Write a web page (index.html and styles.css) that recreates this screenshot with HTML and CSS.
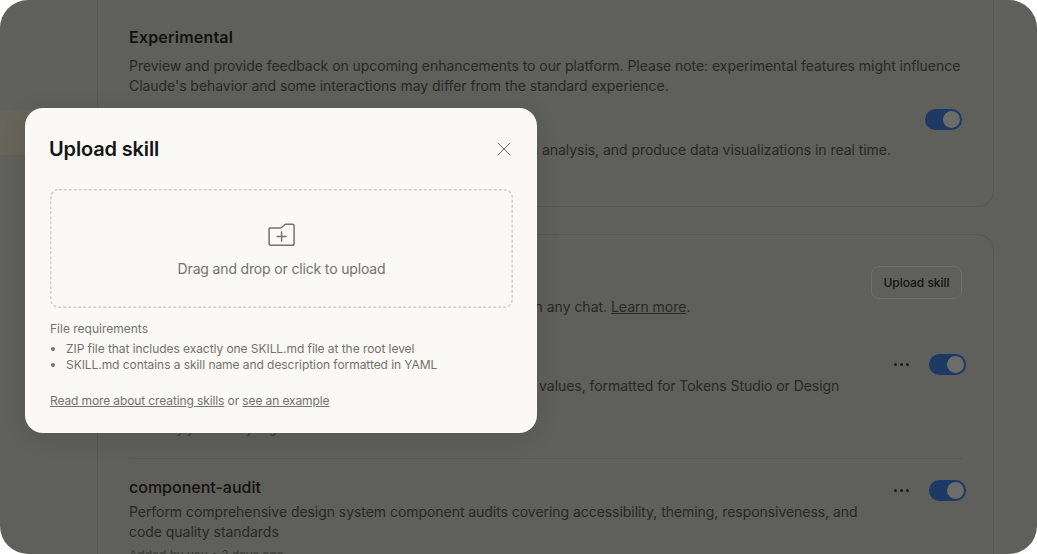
FILE: index.html
```html
<!DOCTYPE html>
<html>
<head>
    <title>Upload skill</title>
    <link rel="stylesheet" href="styles.css">
</head>
<body>
    <div class="stage">
        <div class="sidebar">
            <div class="nav-item"></div>
        </div>

        <div class="main">
            <section class="card card-top">
                <h2 class="card-title">Experimental</h2>
                <p class="card-text">Preview and provide feedback on upcoming enhancements to our platform. Please note: experimental features might influence Claude's behavior and some interactions may differ from the standard experience.</p>
                <div class="row row-analysis">
                    <div class="row-body">
                        <h3 class="skill-name">Analysis tool</h3>
                        <p class="card-text nowrap">Claude can create and execute code to process your data, run analysis, and produce data visualizations in real time.</p>
                    </div>
                    <span class="toggle"><span class="knob"></span></span>
                </div>
            </section>

            <section class="card card-skills">
                <div class="skills-head">
                    <div class="row-body">
                        <h2 class="card-title">Skills</h2>
                        <p class="card-text nowrap">Repeatable, customizable instructions that Claude can apply in any chat. <a href="#">Learn more</a>.</p>
                    </div>
                    <button class="btn-outline">Upload skill</button>
                </div>

                <div class="skill">
                    <div class="row-body">
                        <h3 class="skill-name">design-tokens</h3>
                        <p class="card-text">Generate design tokens from brand colors, fonts, and spacing values, formatted for Tokens Studio or Design Tokens JSON</p>
                        <p class="skill-meta">Added by you • 3 days ago</p>
                    </div>
                    <div class="skill-actions">
                        <span class="dots"><i></i><i></i><i></i></span>
                        <span class="toggle"><span class="knob"></span></span>
                    </div>
                </div>

                <div class="skill">
                    <div class="row-body">
                        <h3 class="skill-name">component-audit</h3>
                        <p class="card-text">Perform comprehensive design system component audits covering accessibility, theming, responsiveness, and code quality standards</p>
                        <p class="skill-meta">Added by you • 3 days ago</p>
                    </div>
                    <div class="skill-actions">
                        <span class="dots"><i></i><i></i><i></i></span>
                        <span class="toggle"><span class="knob"></span></span>
                    </div>
                </div>
            </section>
        </div>

        <div class="modal">
            <div class="modal-head">
                <h1>Upload skill</h1>
                <svg class="close" width="16" height="16" viewBox="0 0 16 16" fill="none" stroke="#6b6a65" stroke-width="1" stroke-linecap="round">
                    <path d="M2 2L14 14M14 2L2 14"/>
                </svg>
            </div>

            <div class="dropzone">
                <svg class="dash-border" width="463" height="119" fill="none">
                    <rect x="0.75" y="0.75" width="461.5" height="117.5" rx="8" stroke="#d2d0ca" stroke-width="1.5" stroke-dasharray="3 2"/>
                </svg>
                <svg width="28" height="25" viewBox="0.7 0.5 28 25" fill="none" stroke="#73726c" stroke-width="1.5" stroke-linejoin="round" stroke-linecap="round">
                    <path d="M2 6.5H13.5L16.5 4C17 3.3 17.6 2.8 18.5 2.8H25C26 2.8 26.8 3.5 26.8 4.5V22C26.8 23 26 23.8 25 23.8H3.5C2.5 23.8 1.8 23 1.8 22V7Z"/>
                    <path d="M14.3 10.5V19.5M9.8 15H18.8"/>
                </svg>
                <span>Drag and drop or click to upload</span>
            </div>

            <p class="req-title">File requirements</p>
            <ul class="req-list">
                <li>ZIP file that includes exactly one SKILL.md file at the root level</li>
                <li>SKILL.md contains a skill name and description formatted in YAML</li>
            </ul>
            <p class="modal-links"><a href="#">Read more about creating skills</a> or <a href="#">see an example</a></p>
        </div>
    </div>
</body>
</html>
```

FILE: styles.css
```css
* {
    box-sizing: border-box;
}
body {
    margin: 0;
    background: #fff;
    font-family: "Inter", "Liberation Sans", sans-serif;
}
p, h1, h2, h3, ul {
    margin: 0;
    padding: 0;
}
.stage {
    position: relative;
    display: flex;
    width: 1037px;
    height: 554px;
    overflow: hidden;
    border-radius: 28px;
    background: #5f5f5c;
}
.sidebar {
    flex: none;
    width: 97px;
    padding-top: 110px;
}
.nav-item {
    height: 45px;
    background: #67645a;
}
.main {
    flex: none;
    width: 897px;
    margin-top: -40px;
}
.card {
    border: 1px solid #575754;
    border-radius: 16px;
    padding: 0 31px;
}
.card-top {
    height: 247px;
    padding-top: 64px;
}
.card-skills {
    margin-top: 27px;
    height: 400px;
}
.card-title {
    font-size: 16px;
    line-height: 24px;
    font-weight: 600;
    letter-spacing: 0.2px;
    color: #121211;
}
.card-text {
    margin-top: 7px;
    font-size: 14px;
    line-height: 20px;
    letter-spacing: -0.05px;
    color: #282826;
}
.card-text a {
    color: inherit;
}
.nowrap {
    white-space: nowrap;
}
.row {
    display: flex;
    justify-content: space-between;
}
.row-body {
    flex: 1;
    min-width: 0;
}
.row-analysis {
    margin-top: 11px;
}
.row-analysis .card-text {
    margin-top: 9px;
}
.row-analysis .toggle {
    margin-top: 2px;
}
.toggle {
    display: block;
    flex: none;
    width: 37px;
    height: 21px;
    padding: 2px;
    border-radius: 11px;
    background: #1d3a64;
}
.knob {
    display: block;
    width: 17px;
    height: 17px;
    margin-left: auto;
    border-radius: 50%;
    background: #6c6c6a;
}
.skills-head {
    display: flex;
    height: 97px;
    padding-top: 31px;
}
.skills-head .card-text {
    margin-top: 7px;
    letter-spacing: -0.02px;
}
.btn-outline {
    flex: none;
    width: 91px;
    height: 33px;
    padding: 0;
    border: 1px solid #6e6e6b;
    border-radius: 8px;
    background: none;
    font: 500 12px "Inter", sans-serif;
    letter-spacing: -0.02px;
    color: #121211;
}
.skill {
    display: flex;
    gap: 30px;
    height: 127px;
    padding-top: 17px;
    border-bottom: 1px solid #575754;
}
.skill + .skill {
    padding-top: 16px;
    border-bottom: 0;
}
.skill .card-text {
    max-width: 740px;
    margin-top: 3px;
}
.skill-name {
    font-size: 16px;
    line-height: 24px;
    font-weight: 500;
    color: #121211;
}
.skill-meta {
    margin-top: 5px;
    font-size: 12px;
    line-height: 16px;
    color: #3b3b39;
}
.skill-actions {
    display: flex;
    align-items: center;
    gap: 20px;
    flex: none;
    height: 21px;
    margin-top: 5px;
    margin-right: -4px;
}
.dots {
    display: flex;
    gap: 3px;
}
.dots i {
    width: 3px;
    height: 3px;
    border-radius: 50%;
    background: #1c1c1b;
}
.modal {
    position: absolute;
    left: 25px;
    top: 108px;
    width: 512px;
    height: 325px;
    padding: 0 24px 0 25px;
    border-radius: 18px;
    background: #faf9f5;
    box-shadow: 0 4px 24px rgba(0, 0, 0, 0.1);
}
.modal-head {
    display: flex;
    align-items: center;
    justify-content: space-between;
    height: 81px;
}
.modal-head h1 {
    margin-left: -1px;
    font-size: 20px;
    line-height: 28px;
    font-weight: 600;
    letter-spacing: -0.15px;
    color: #141413;
}
.close {
    margin-right: 1px;
}
.dropzone {
    position: relative;
    display: flex;
    flex-direction: column;
    align-items: center;
    height: 119px;
    padding-top: 33px;
    font-size: 14px;
    line-height: 20px;
    letter-spacing: -0.16px;
    color: #73726c;
}
.dash-border {
    position: absolute;
    left: 0;
    top: 0;
}
.dropzone span {
    margin-top: 12px;
}
.req-title {
    margin-top: 13px;
    font-size: 12px;
    line-height: 16px;
    color: #73726c;
}
.req-list {
    margin-top: 4px;
    padding-left: 16px;
    font-size: 12px;
    line-height: 16px;
    letter-spacing: -0.06px;
    color: #73726c;
}
.modal-links {
    margin-top: 20px;
    font-size: 12px;
    line-height: 16px;
    letter-spacing: -0.115px;
    color: #73726c;
}
.modal-links a {
    color: inherit;
}
```
